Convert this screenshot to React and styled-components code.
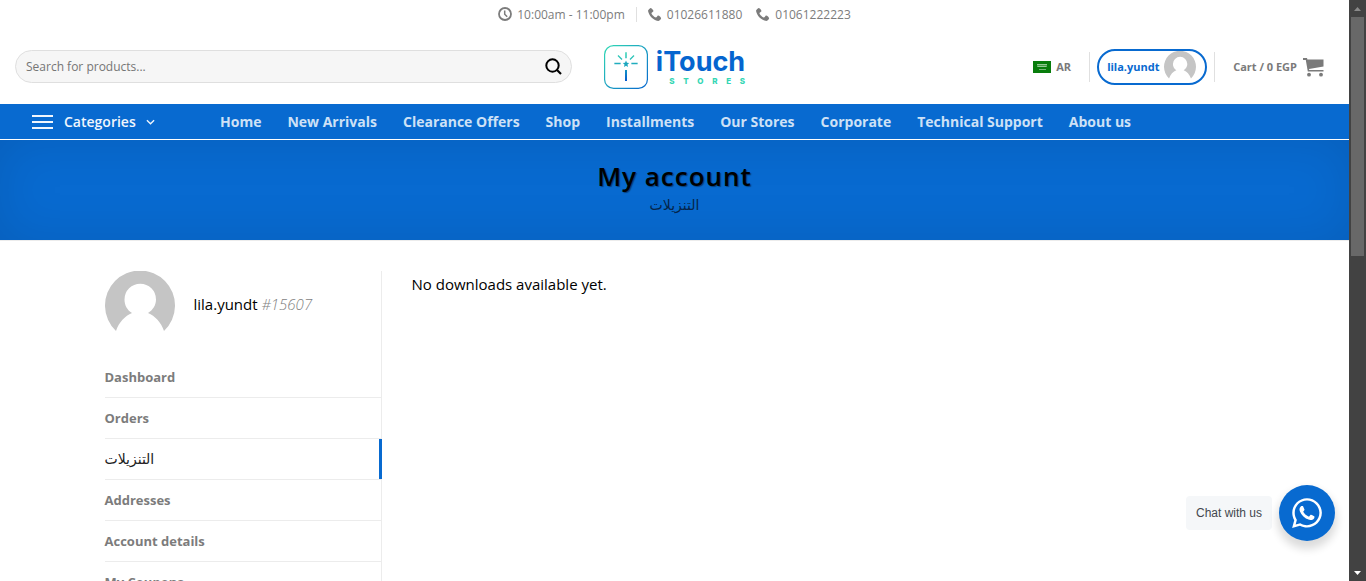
import React from "react";
import styled, { createGlobalStyle } from "styled-components";
import { FaWhatsapp } from "react-icons/fa";
import { ImPhone } from "react-icons/im";

const blue = "#086ad0";
const sans = '"Segoe UI", "Open Sans", "Noto Sans", "DejaVu Sans", sans-serif';

const GlobalStyle = createGlobalStyle`
  *, *::before, *::after { box-sizing: border-box; }
  body { margin: 0; font-family: ${sans}; font-size: 15px; color: #000; background: #fff; }
  a { color: inherit; text-decoration: none; }
  h1, p, ul { margin: 0; padding: 0; }
  ul { list-style: none; }
  button, input { font-family: inherit; }
  svg { display: block; flex: none; }
`;

const Shell = styled.div`
  display: flex;
  height: 100vh;
  overflow: hidden;
`;

const Page = styled.div`
  flex: 1;
  min-width: 0;
  overflow: hidden;
`;

const TopBar = styled.div`
  display: flex;
  justify-content: center;
  align-items: center;
  height: 28px;
  color: #7c7c7c;
  font-size: 12px;
`;

const TopItem = styled.a`
  display: flex;
  align-items: center;
  gap: 5px;
  margin-right: ${(p) => (p.$last ? "0" : p.$wide ? "11px" : "14px")};
`;

const Divider = styled.span`
  width: 1px;
  height: ${(p) => p.$height}px;
  margin-right: ${(p) => p.$gap}px;
  background: #e0e0e0;
`;

const HeaderMain = styled.header`
  display: grid;
  grid-template-columns: 1fr auto 1fr;
  align-items: center;
  height: 76px;
  padding: 0 15px;
`;

const SearchForm = styled.form`
  display: flex;
  align-items: center;
  height: 33px;
  padding: 0 9px 0 10px;
  border: 1px solid #dfdfdf;
  border-radius: 99px;
  background: #f6f6f6;
`;

const SearchInput = styled.input`
  flex: 1;
  min-width: 0;
  padding: 0;
  border: 0;
  outline: 0;
  background: transparent;
  font-size: 12px;
  color: #333;
  &::placeholder { color: #757575; opacity: 1; }
`;

const IconButton = styled.button`
  display: flex;
  padding: 0;
  border: 0;
  background: none;
  color: #000;
`;

const Logo = styled.a`
  display: flex;
  gap: 8px;
  height: 46px;
  padding-top: 2px;
  margin: 0 32px;
`;

const LogoText = styled.span`
  display: flex;
  flex-direction: column;
  align-items: flex-end;
  font-family: Inter, sans-serif;
`;

const LogoName = styled.span`
  font-size: 27px;
  font-weight: 700;
  line-height: 33px;
  color: #0565cf;
`;

const LogoSub = styled.span`
  display: flex;
  justify-content: space-between;
  width: 76px;
  font-size: 8px;
  font-weight: 800;
  line-height: 6px;
  color: #35d6b4;
`;

const HeaderRight = styled.div`
  display: flex;
  align-items: center;
  justify-content: flex-end;
  padding: 2px 10px 0 0;
  font-size: 11px;
  font-weight: 700;
  line-height: 14px;
  color: #7a7a7a;
`;

const Language = styled.a`
  display: flex;
  align-items: center;
  gap: 5px;
  margin-right: 18px;
`;

const AccountPill = styled.a`
  display: flex;
  align-items: center;
  justify-content: space-between;
  width: 110px;
  height: 36px;
  margin-right: 7px;
  padding: 0 9px 0 8px;
  border: 2px solid ${blue};
  border-radius: 99px;
  color: ${blue};
`;

const Cart = styled.a`
  display: flex;
  align-items: center;
  gap: 6px;
`;

const NavBar = styled.nav`
  display: flex;
  align-items: center;
  height: 36px;
  padding-left: 32px;
  border-bottom: 1px solid #fff;
  background: ${blue};
`;

const Categories = styled.button`
  display: flex;
  align-items: center;
  width: 188px;
  padding: 0;
  border: 0;
  background: none;
  color: #f0f6fd;
  font-size: 14px;
  font-weight: 600;
`;

const CategoriesLabel = styled.span`
  margin: 0 10px 0 11px;
`;

const NavList = styled.ul`
  display: flex;
  gap: 26px;
  font-size: 14px;
  font-weight: 700;
  color: #cee1f6;
  white-space: nowrap;
`;

const TitleBand = styled.section`
  display: flex;
  flex-direction: column;
  align-items: center;
  height: 101px;
  padding-top: 18px;
  border-bottom: 1px solid #ececec;
  background: ${blue};
  box-shadow: inset 0 0 50px rgba(0, 0, 0, 0.1);
`;

const Title = styled.h1`
  font-size: 26px;
  font-weight: 600;
  line-height: 37px;
  letter-spacing: 1px;
  text-shadow: 1px 1px 1px rgba(0, 0, 0, 0.4);
`;

const Subtitle = styled.p`
  font-size: 14px;
  line-height: 20px;
  color: #05254a;
`;

const Container = styled.main`
  display: flex;
  max-width: 1140px;
  margin: 0 auto;
  padding-top: 30px;
`;

const Sidebar = styled.aside`
  width: 277px;
  flex: none;
  border-right: 1px solid #ececec;
`;

const User = styled.div`
  display: flex;
  align-items: center;
  gap: 19px;
  height: 70px;
  margin-bottom: 16px;
`;

const UserName = styled.span`
  padding-bottom: 4px;
  em { color: #7f7f7f; font-weight: 300; }
`;

const MenuItem = styled.li`
  position: relative;
  border-bottom: 1px solid #ececec;
  &::after {
    content: "";
    display: ${(p) => (p.$active ? "block" : "none")};
    position: absolute;
    top: 0;
    right: -1px;
    bottom: 0;
    width: 3px;
    background: ${blue};
  }
`;

const MenuLink = styled.a`
  display: block;
  padding: 10px 0;
  font-size: ${(p) => (p.$active ? 14 : 13)}px;
  font-weight: ${(p) => (p.$active ? 400 : 700)};
  line-height: 20px;
  color: ${(p) => (p.$active ? "#222" : "#7c7c7c")};
`;

const Content = styled.div`
  flex: 1;
  padding: 1px 0 0 30px;
  line-height: 24px;
`;

const Chat = styled.div`
  position: fixed;
  right: 31px;
  bottom: 40px;
  display: flex;
  align-items: center;
  gap: 7px;
`;

const ChatLabel = styled.span`
  padding: 9px 10px;
  border-radius: 4px;
  background: #f5f7f9;
  color: #43474e;
  font-family: "Liberation Sans", Arial, sans-serif;
  font-size: 12px;
  line-height: 16px;
`;

const ChatButton = styled.button`
  display: flex;
  align-items: center;
  justify-content: center;
  width: 56px;
  height: 56px;
  padding: 0;
  border: 0;
  border-radius: 50%;
  background: ${blue};
  color: #fff;
  box-shadow: 0 6px 8px 2px rgba(0, 0, 0, 0.14);
`;

const ScrollRail = styled.div`
  display: flex;
  flex-direction: column;
  align-items: center;
  justify-content: space-between;
  width: 17px;
  flex: none;
  background: #424242;
`;

const ScrollThumb = styled.div`
  width: 13px;
  height: 239px;
  background: #686868;
`;

const ScrollEnd = styled.div`
  display: flex;
  align-items: center;
  justify-content: center;
  height: 17px;
`;

const ScrollStart = styled.div`
  display: flex;
  flex-direction: column;
  align-items: center;
`;

const Avatar = ({ size }) => (
  <svg width={size} height={size} viewBox="0 0 70 70" aria-hidden="true">
    <path
      fill="#c5c5c5"
      d="M11 60A35 35 0 1 1 59 60C56 51 50 45 43 42C48 39 51 34 51 28.500A15.500 15.500 0 0 0 19.500 28.500C19.500 34 22 39 27 42C20 45 14 51 11 60Z"
    />
  </svg>
);

const ClockIcon = () => (
  <svg width="14" height="14" viewBox="0 0 14 14" fill="none" stroke="currentColor" aria-hidden="true">
    <circle cx="7" cy="7" r="6" strokeWidth="1.800" />
    <path d="M6.700 3.500V7.200L9.200 9.800" strokeWidth="1.500" />
  </svg>
);

const SearchIcon = () => (
  <svg width="17" height="17" viewBox="0 0 17 17" fill="none" stroke="currentColor" strokeWidth="2" aria-hidden="true">
    <circle cx="7.500" cy="7.500" r="6.200" />
    <path d="M12 12L16 16" strokeWidth="2.200" />
  </svg>
);

const LogoMark = () => (
  <svg width="44" height="44" viewBox="0 0 44 44" fill="none" aria-hidden="true">
    <defs>
      <linearGradient id="frame" x1="0" y1="0" x2="44" y2="44" gradientUnits="userSpaceOnUse">
        <stop offset="0" stopColor="#32dcb4" />
        <stop offset="1" stopColor="#0565cf" />
      </linearGradient>
      <linearGradient id="wand" x1="22" y1="8" x2="22" y2="36" gradientUnits="userSpaceOnUse">
        <stop offset="0" stopColor="#32d2b4" />
        <stop offset="0.600" stopColor="#1596c4" />
        <stop offset="1" stopColor="#0558cf" />
      </linearGradient>
    </defs>
    <rect x="0.600" y="0.600" width="42.800" height="42.800" rx="9" stroke="url(#frame)" strokeWidth="1.200" />
    <path
      d="M21.900 8V12.500H22.100V8ZM11 18.500H16V18.700H11ZM28 18.500H33V18.700H28ZM14 10.500L18 14.500M30 10.500L26 14.500"
      stroke="url(#wand)"
      strokeWidth="1.300"
    />
    <path d="M22 15.500L23 17.800L25.200 18L23.500 19.500L24 22L22 20.700L20 22L20.500 19.500L18.800 18L21 17.800Z" fill="#1da7bf" />
    <rect x="21" y="25" width="2" height="11" fill="url(#wand)" />
  </svg>
);

const Flag = () => (
  <svg width="18" height="12" viewBox="0 0 18 12" aria-hidden="true">
    <rect width="18" height="12" fill="#087d0c" />
    <path d="M4 3.500H14M4.500 5.500H13.500M5 3V6M7 3V6M9 3V6M11 3V6M13 3V6" stroke="#b5dbb6" strokeWidth="0.700" />
    <path d="M6 8.500H13" stroke="#a4d0a6" strokeWidth="0.700" />
  </svg>
);

const CartIcon = () => (
  <svg width="21" height="20" viewBox="0 0 21 20" aria-hidden="true">
    <path fill="#7a7a7a" d="M0 1H4L4.400 2.500H20.500V9.500L6 12L6.200 13H20.500V14.600H4.800L2.800 3H0Z" />
    <circle cx="6" cy="17.700" r="1.900" fill="#7a7a7a" />
    <circle cx="18" cy="17.700" r="1.900" fill="#7a7a7a" />
  </svg>
);

const navItems = [
  "Home",
  "New Arrivals",
  "Clearance Offers",
  "Shop",
  "Installments",
  "Our Stores",
  "Corporate",
  "Technical Support",
  "About us",
];

const menuItems = ["Dashboard", "Orders", "التنزيلات", "Addresses", "Account details", "My Coupons"];

export default function App() {
  return (
    <Shell>
      <GlobalStyle />
      <Page>
        <TopBar>
          <TopItem href="#hours" $wide>
            <ClockIcon />
            10:00am - 11:00pm
          </TopItem>
          <Divider $height={15} $gap={11} />
          <TopItem href="tel:01026611880">
            <ImPhone size={14} />
            01026611880
          </TopItem>
          <TopItem href="tel:01061222223" $last>
            <ImPhone size={14} />
            01061222223
          </TopItem>
        </TopBar>

        <HeaderMain>
          <SearchForm>
            <SearchInput type="search" aria-label="Search for products" placeholder="Search for products..." />
            <IconButton type="button" aria-label="Search">
              <SearchIcon />
            </IconButton>
          </SearchForm>
          <Logo href="#home">
            <LogoMark />
            <LogoText>
              <LogoName>iTouch</LogoName>
              <LogoSub aria-label="Stores">
                {"STORES".split("").map((letter, i) => (
                  <span key={i}>{letter}</span>
                ))}
              </LogoSub>
            </LogoText>
          </Logo>
          <HeaderRight>
            <Language href="#ar">
              <Flag />
              AR
            </Language>
            <Divider $height={30} $gap={7} />
            <AccountPill href="#account">
              lila.yundt
              <Avatar size={32} />
            </AccountPill>
            <Divider $height={30} $gap={18} />
            <Cart href="#cart">
              Cart / 0 EGP
              <CartIcon />
            </Cart>
          </HeaderRight>
        </HeaderMain>

        <NavBar>
          <Categories type="button">
            <svg width="21" height="16" viewBox="0 0 21 16" stroke="currentColor" strokeWidth="2" aria-hidden="true">
              <path d="M0 2H21M0 8H21M0 14H21" />
            </svg>
            <CategoriesLabel>Categories</CategoriesLabel>
            <svg width="9" height="6" viewBox="0 0 10 6" fill="none" stroke="currentColor" strokeWidth="1.500" aria-hidden="true">
              <path d="M1 1L5 5L9 1" />
            </svg>
          </Categories>
          <NavList>
            {navItems.map((item) => (
              <li key={item}>
                <a href="#shop">{item}</a>
              </li>
            ))}
          </NavList>
        </NavBar>

        <TitleBand>
          <Title>My account</Title>
          <Subtitle lang="ar">التنزيلات</Subtitle>
        </TitleBand>

        <Container>
          <Sidebar>
            <User>
              <Avatar size={70} />
              <UserName>
                lila.yundt <em>#15607</em>
              </UserName>
            </User>
            <ul>
              {menuItems.map((item, i) => (
                <MenuItem key={item} $active={i === 2}>
                  <MenuLink href="#account" $active={i === 2}>
                    {item}
                  </MenuLink>
                </MenuItem>
              ))}
            </ul>
          </Sidebar>
          <Content>
            <p>No downloads available yet.</p>
          </Content>
        </Container>
      </Page>

      <Chat>
        <ChatLabel>Chat with us</ChatLabel>
        <ChatButton type="button" aria-label="Chat on WhatsApp">
          <FaWhatsapp size={34} />
        </ChatButton>
      </Chat>

      <ScrollRail aria-hidden="true">
        <ScrollStart>
          <ScrollEnd>
            <svg width="7" height="4" viewBox="0 0 7 4">
              <path d="M0 4L3.500 0L7 4Z" fill="#8a8a8a" />
            </svg>
          </ScrollEnd>
          <ScrollThumb />
        </ScrollStart>
        <ScrollEnd>
          <svg width="7" height="4" viewBox="0 0 7 4">
            <path d="M0 0L3.500 4L7 0Z" fill="#fff" />
          </svg>
        </ScrollEnd>
      </ScrollRail>
    </Shell>
  );
}
